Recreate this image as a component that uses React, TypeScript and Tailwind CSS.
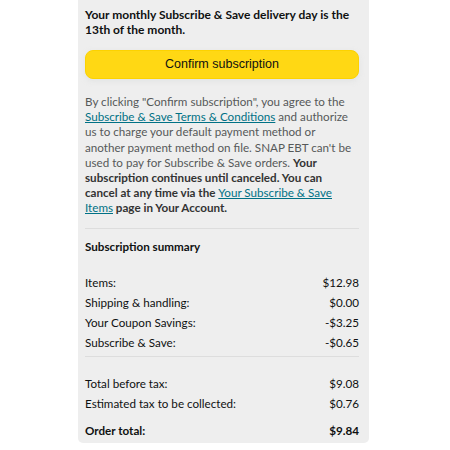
const rows = [
  { label: 'Items:', value: '$12.98' },
  { label: 'Shipping & handling:', value: '$0.00' },
  { label: 'Your Coupon Savings:', value: '-$3.25' },
  { label: 'Subscribe & Save:', value: '-$0.65' },
]

const totals = [
  { label: 'Total before tax:', value: '$9.08' },
  { label: 'Estimated tax to be collected:', value: '$0.76' },
]

export default function App() {
  return (
    <div className="flex h-[450px] w-[450px] bg-white pl-[78px] font-['Lato',sans-serif]">
      <div className="flex h-[443px] w-[291px] flex-col rounded-b-[5px] bg-[#eeeeee] pr-[10px] pl-[7px] text-[11.65px] text-[#0f1111]">
        <p className="mt-[7px] text-[12px] leading-[15px] font-bold">
          Your monthly Subscribe &amp; Save delivery day is the 13th of the month.
        </p>

        <button className="mt-[13px] h-[29px] w-full rounded-[8px] border border-[#fcd200] bg-[#ffd814] font-['Liberation_Sans',Arial,sans-serif] text-[12.5px] text-[#0f1111] shadow-[0_2px_5px_0_rgba(213,217,217,0.5)]">
          Confirm subscription
        </button>

        <p className="mt-[15px] mr-[6px] leading-[15.2px] text-[#565959]">
          By clicking "Confirm subscription", you agree to the{' '}
          <a className="text-[#007185] underline">Subscribe &amp; Save Terms &amp; Conditions</a>{' '}
          and authorize us to charge your default payment method or another payment method on file. SNAP EBT
          can't be used to pay for Subscribe &amp; Save orders.{' '}
          <span className="font-bold text-[#333333]">
            Your subscription continues until canceled. You can cancel at any time via the{' '}
            <a className="font-normal text-[#007185] underline">Your Subscribe &amp; Save Items</a> page in Your
            Account.
          </span>
        </p>

        <div className="mt-[12px] border-t border-[#dddddd]" />

        <h3 className="mt-[10px] leading-[15px] font-bold">Subscription summary</h3>

        <div className="mt-[21px] flex flex-col gap-[5px]">
          {rows.map(r => (
            <div key={r.label} className="flex justify-between leading-[15px]">
              <span>{r.label}</span>
              <span>{r.value}</span>
            </div>
          ))}
        </div>

        <div className="mt-[6px] border-t border-[#dddddd]" />

        <div className="mt-[19px] flex flex-col gap-[5px]">
          {totals.map(r => (
            <div key={r.label} className="flex justify-between leading-[15px]">
              <span>{r.label}</span>
              <span>{r.value}</span>
            </div>
          ))}
        </div>

        <div className="mt-[12px] flex justify-between leading-[15px] font-bold">
          <span>Order total:</span>
          <span>$9.84</span>
        </div>
      </div>
    </div>
  )
}
